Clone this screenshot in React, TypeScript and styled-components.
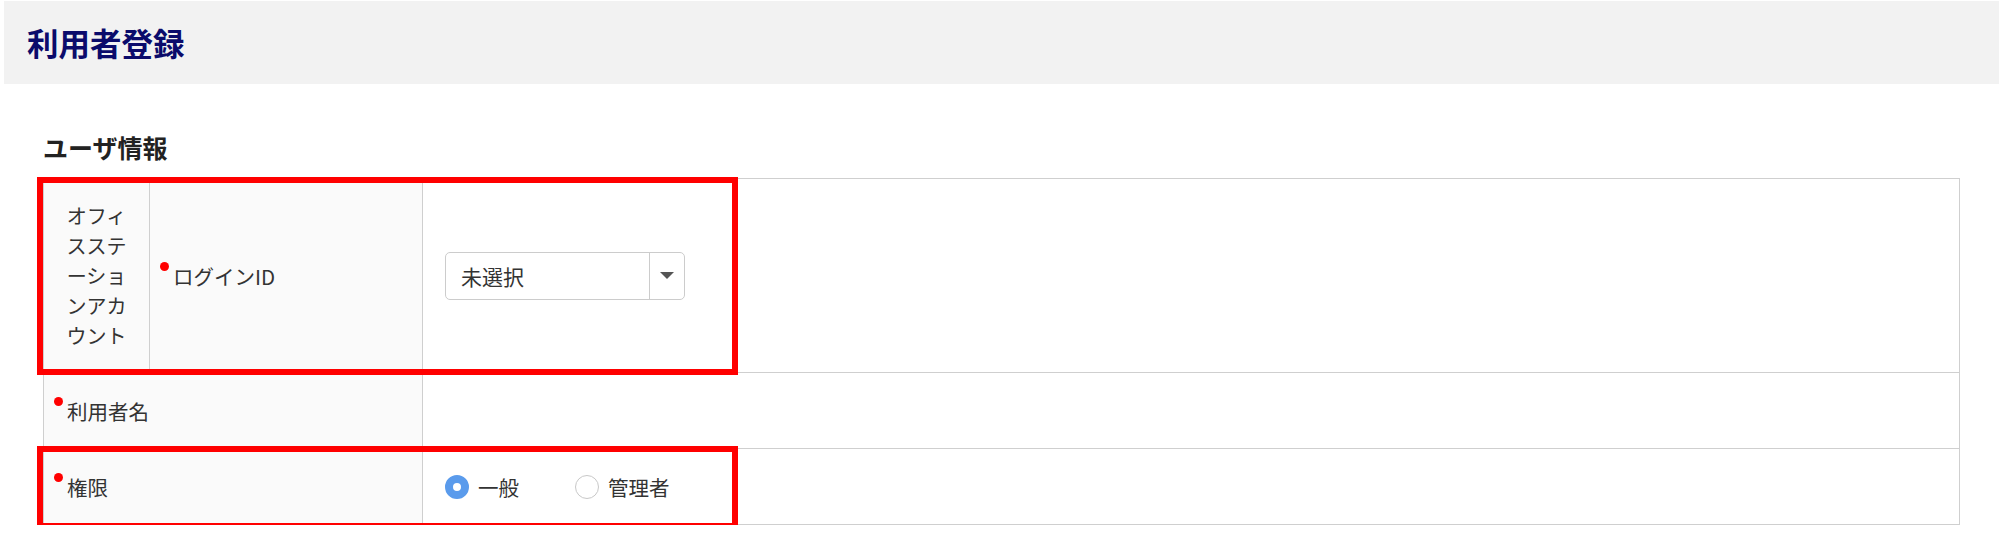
import React from "react";
import styled, { createGlobalStyle } from "styled-components";

const Global = createGlobalStyle`
  html, body { margin: 0; padding: 0; background: #fff; }
  body {
    font-family: "Noto Sans CJK JP", "Noto Sans", sans-serif;
    color: #333;
  }
`;

const Page = styled.div`
  width: 2000px;
  padding-top: 1px;
`;

const Header = styled.header`
  margin-left: 4px;
  margin-right: 1px;
  height: 83px;
  background: #f2f2f2;
  display: flex;
  align-items: center;
  padding-left: 23px;
`;

const Title = styled.h1`
  margin: 0;
  font-size: 31.5px;
  font-weight: 700;
  color: #0b0b6b;
  line-height: 1;
`;

const Main = styled.main`
  padding: 0 40px 0 43px;
`;

const SectionTitle = styled.h2`
  margin: 47px 0 15px;
  font-size: 25px;
  line-height: 32px;
  font-weight: 700;
  color: #222;
`;

const TableWrap = styled.div`
  position: relative;
  border: 1px solid #cfcfcf;
`;

const Row = styled.div<{ $h: number }>`
  display: grid;
  grid-template-columns: 379px 1fr;
  min-height: ${(p) => p.$h}px;
  & + & {
    border-top: 1px solid #cfcfcf;
  }
`;

const LabelArea = styled.div`
  display: grid;
  grid-template-columns: 106px 1fr;
  background: #fafafa;
  border-right: 1px solid #cfcfcf;
`;

const GroupCell = styled.div`
  padding: 0 20px;
  display: flex;
  align-items: center;
  justify-content: center;
  text-align: center;
  font-size: 20px;
  line-height: 30px;
  border-right: 1px solid #cfcfcf;
`;

const LabelCell = styled.div`
  display: flex;
  align-items: center;
  padding-left: 10px;
  font-size: 20.5px;
  line-height: 30px;
  background: #fafafa;
`;

const FullLabel = styled(LabelCell)`
  border-right: 1px solid #cfcfcf;
`;

const Required = styled.span`
  display: inline-block;
  width: 9px;
  height: 9px;
  border-radius: 50%;
  background: #f00;
  margin-right: 4px;
  align-self: flex-start;
  margin-top: 1px;
`;

const LabelText = styled.span`
  display: inline-flex;
  align-items: flex-start;
`;

const ValueCell = styled.div`
  display: flex;
  align-items: center;
  padding-left: 22px;
  background: #fff;
`;

const Select = styled.div`
  width: 240px;
  height: 48px;
  box-sizing: border-box;
  border: 1px solid #ccc;
  border-radius: 5px;
  display: flex;
  align-items: stretch;
  background: #fff;
`;

const SelectText = styled.div`
  flex: 1;
  display: flex;
  align-items: center;
  padding-left: 15px;
  font-size: 21px;
  color: #333;
`;

const SelectArrow = styled.div`
  width: 34px;
  border-left: 1px solid #ccc;
  display: flex;
  align-items: center;
  justify-content: center;
`;

const Triangle = styled.span`
  width: 0;
  height: 0;
  border-left: 7px solid transparent;
  border-right: 7px solid transparent;
  border-top: 7px solid #555;
`;

const RadioGroup = styled.div`
  display: flex;
  align-items: center;
  gap: 56px;
`;

const RadioOption = styled.label`
  display: flex;
  align-items: center;
  gap: 9px;
  font-size: 20.5px;
  color: #333;
`;

const RadioCircle = styled.span<{ $checked?: boolean }>`
  width: 24px;
  height: 24px;
  box-sizing: border-box;
  border-radius: 50%;
  background: #fff;
  border: ${(p) => (p.$checked ? "8px solid #5a9bec" : "1.5px solid #c8c8c8")};
`;

const Highlight = styled.div<{ $top: number; $height: number }>`
  position: absolute;
  left: -7px;
  top: ${(p) => p.$top}px;
  width: 701px;
  height: ${(p) => p.$height}px;
  box-sizing: border-box;
  border: 6px solid #ff0000;
  pointer-events: none;
`;

export default function App() {
  return (
    <Page>
      <Global />
      <Header>
        <Title>利用者登録</Title>
      </Header>
      <Main>
        <SectionTitle>ユーザ情報</SectionTitle>
        <TableWrap>
          <Row $h={193}>
            <LabelArea>
              <GroupCell>オフィスステーションアカウント</GroupCell>
              <LabelCell>
                <LabelText>
                  <Required />
                  ログインID
                </LabelText>
              </LabelCell>
            </LabelArea>
            <ValueCell>
              <Select>
                <SelectText>未選択</SelectText>
                <SelectArrow>
                  <Triangle />
                </SelectArrow>
              </Select>
            </ValueCell>
          </Row>
          <Row $h={75}>
            <FullLabel>
              <LabelText>
                <Required />
                利用者名
              </LabelText>
            </FullLabel>
            <ValueCell />
          </Row>
          <Row $h={75}>
            <FullLabel>
              <LabelText>
                <Required />
                権限
              </LabelText>
            </FullLabel>
            <ValueCell>
              <RadioGroup>
                <RadioOption>
                  <RadioCircle $checked />
                  一般
                </RadioOption>
                <RadioOption>
                  <RadioCircle />
                  管理者
                </RadioOption>
              </RadioGroup>
            </ValueCell>
          </Row>
          <Highlight $top={-2} $height={198} />
          <Highlight $top={267} $height={83} />
        </TableWrap>
      </Main>
    </Page>
  );
}
